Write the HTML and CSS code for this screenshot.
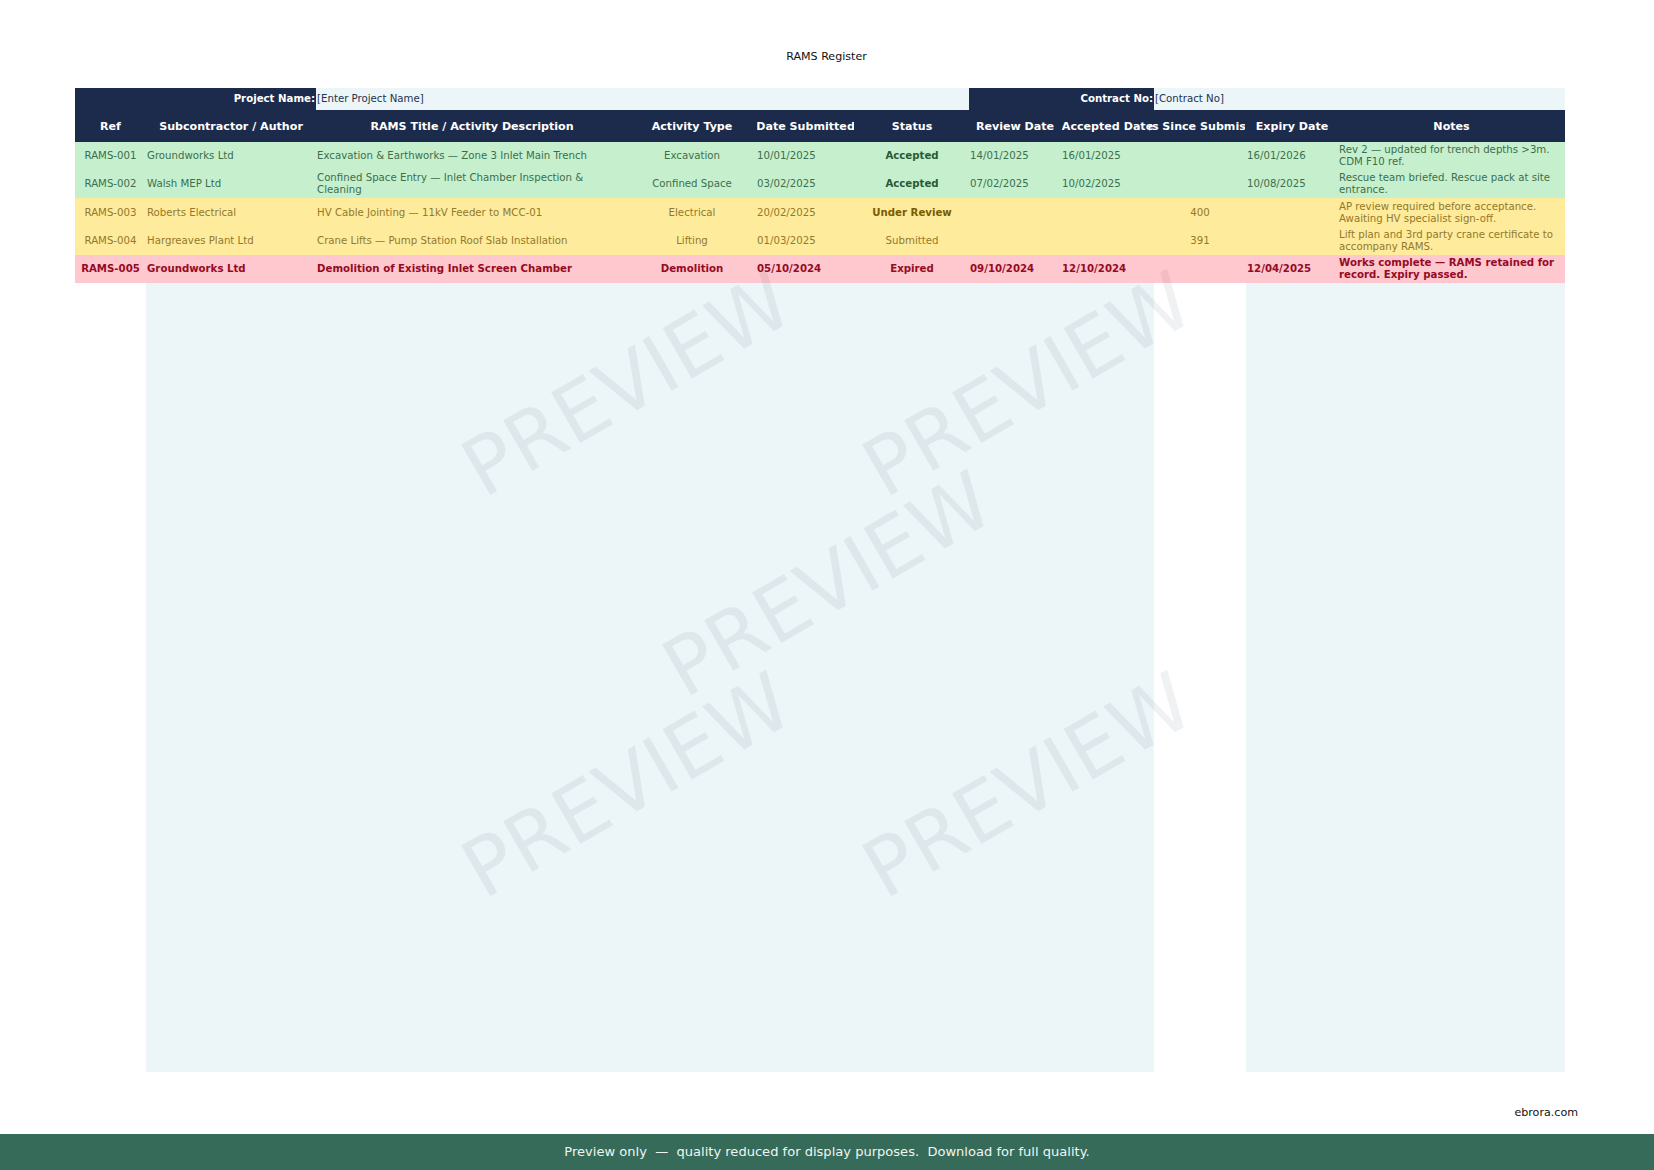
FILE: index.html
```html
<!DOCTYPE html>
<html lang="en">
<head>
<meta charset="utf-8">
<title>RAMS Register</title>
<link rel="stylesheet" href="styles.css">
</head>
<body>
<main class="page">
  <h1 class="title">RAMS Register</h1>
  <table class="register">
    <colgroup>
      <col class="c-ref"><col class="c-sub"><col class="c-title"><col class="c-type"><col class="c-date"><col class="c-status"><col class="c-review"><col class="c-acc"><col class="c-days"><col class="c-exp"><col class="c-notes">
    </colgroup>
    <thead>
      <tr class="band">
        <th colspan="2" class="label">Project Name:</th>
        <td colspan="4" class="field">[Enter Project Name]</td>
        <th colspan="2" class="label">Contract No:</th>
        <td colspan="3" class="field">[Contract No]</td>
      </tr>
      <tr class="head">
        <th><div class="clip">Ref</div></th>
        <th><div class="clip">Subcontractor / Author</div></th>
        <th><div class="clip">RAMS Title / Activity Description</div></th>
        <th><div class="clip">Activity Type</div></th>
        <th><div class="clip">Date Submitted</div></th>
        <th><div class="clip">Status</div></th>
        <th><div class="clip">Review Date</div></th>
        <th><div class="clip">Accepted Date</div></th>
        <th><div class="clip spill">Days Since Submission</div></th>
        <th><div class="clip">Expiry Date</div></th>
        <th><div class="clip">Notes</div></th>
      </tr>
    </thead>
    <tbody>
      <tr class="row green">
        <td class="mid">RAMS-001</td><td>Groundworks Ltd</td><td>Excavation &amp; Earthworks — Zone 3 Inlet Main Trench</td><td class="mid">Excavation</td><td>10/01/2025</td><td class="mid strong">Accepted</td><td>14/01/2025</td><td>16/01/2025</td><td class="mid"></td><td>16/01/2026</td><td>Rev 2 — updated for trench depths &gt;3m. CDM F10 ref.</td>
      </tr>
      <tr class="row green">
        <td class="mid">RAMS-002</td><td>Walsh MEP Ltd</td><td>Confined Space Entry — Inlet Chamber Inspection &amp; Cleaning</td><td class="mid">Confined Space</td><td>03/02/2025</td><td class="mid strong">Accepted</td><td>07/02/2025</td><td>10/02/2025</td><td class="mid"></td><td>10/08/2025</td><td>Rescue team briefed. Rescue pack at site entrance.</td>
      </tr>
      <tr class="row amber tall">
        <td class="mid">RAMS-003</td><td>Roberts Electrical</td><td>HV Cable Jointing — 11kV Feeder to MCC-01</td><td class="mid">Electrical</td><td>20/02/2025</td><td class="mid strong">Under Review</td><td></td><td></td><td class="mid">400</td><td></td><td>AP review required before acceptance. Awaiting HV specialist sign-off.</td>
      </tr>
      <tr class="row amber">
        <td class="mid">RAMS-004</td><td>Hargreaves Plant Ltd</td><td>Crane Lifts — Pump Station Roof Slab Installation</td><td class="mid">Lifting</td><td>01/03/2025</td><td class="mid">Submitted</td><td></td><td></td><td class="mid">391</td><td></td><td>Lift plan and 3rd party crane certificate to accompany RAMS.</td>
      </tr>
      <tr class="row red">
        <td class="mid">RAMS-005</td><td>Groundworks Ltd</td><td>Demolition of Existing Inlet Screen Chamber</td><td class="mid">Demolition</td><td>05/10/2024</td><td class="mid">Expired</td><td>09/10/2024</td><td>12/10/2024</td><td class="mid"></td><td>12/04/2025</td><td>Works complete — RAMS retained for record. Expiry passed.</td>
      </tr>
    </tbody>
  </table>
  <div class="filler">
    <div class="fill-a"></div>
    <div class="fill-b"></div>
  </div>
  <p class="brand">ebrora.com</p>
  <div class="watermarks" aria-hidden="true">
    <span class="mark m1">PREVIEW</span>
    <span class="mark m2">PREVIEW</span>
    <span class="mark m3">PREVIEW</span>
    <span class="mark m4">PREVIEW</span>
    <span class="mark m5">PREVIEW</span>
  </div>
</main>
<footer class="notice">Preview only  —  quality reduced for display purposes.  Download for full quality.</footer>
</body>
</html>
```
FILE: styles.css
```css
* { box-sizing: border-box; }
html, body { margin: 0; padding: 0; }
body {
  width: 1654px;
  height: 1170px;
  overflow: hidden;
  background: #fff;
  font-family: "DejaVu Sans", sans-serif;
  display: flex;
  flex-direction: column;
}
.page {
  position: relative;
  flex: 1;
  padding: 49px 89px 0 75px;
  display: flex;
  flex-direction: column;
}
.title {
  margin: 0 -13px 0 0;
  height: 39px;
  font-size: 11.1px;
  font-weight: 400;
  line-height: 16px;
  text-align: center;
  color: #111;
}
.register {
  width: 1490px;
  table-layout: fixed;
  border-collapse: collapse;
  font-size: 10.2px;
}
.c-ref { width: 71px; }
.c-sub { width: 170px; }
.c-title { width: 312px; }
.c-type { width: 128px; }
.c-date { width: 99px; }
.c-status { width: 114px; }
.c-review { width: 92px; }
.c-acc { width: 93px; }
.c-days { width: 92px; }
.c-exp { width: 92px; }
.c-notes { width: 227px; }
.register th, .register td { padding: 0 1px; }
.band { height: 22px; }
.band .label {
  background: #1c2b4c;
  color: #fff;
  text-align: right;
  font-size: 10.2px;
  font-weight: 700;
  padding-bottom: 2px;
}
.band .field {
  background: #ecf5f8;
  color: #23334f;
  font-size: 10.2px;
  padding-bottom: 2px;
}
.head { height: 32px; background: #1c2b4c; color: #fff; }
.head th { font-size: 11.1px; font-weight: 700; }
.clip { display: flex; justify-content: center; overflow: hidden; white-space: nowrap; }
.spill { margin-left: -6px; padding-left: 6px; }
.row { height: 28px; }
.row.tall { height: 29px; }
.row td { line-height: 11.6px; vertical-align: middle; }
.mid { text-align: center; }
.strong { font-weight: 700; }
.green { background: #c6efce; color: #3b6f4c; }
.green .strong { color: #2a5a32; }
.amber { background: #ffeb9c; color: #93792a; }
.amber .strong { color: #7a5c00; }
.red { background: #ffc7ce; color: #960a24; font-weight: 700; }
.filler {
  flex: none;
  height: 789px;
  margin-left: 71px;
  display: flex;
  justify-content: space-between;
}
.fill-a { width: 1008px; background: #ecf5f8; }
.fill-b { width: 319px; background: #ecf5f8; }
.brand {
  margin: 33px -13px 0 0;
  font-size: 11.1px;
  line-height: 16px;
  text-align: right;
  color: #111;
}
.watermarks { position: absolute; inset: 0; pointer-events: none; }
.mark {
  position: absolute;
  width: 0;
  height: 0;
  display: flex;
  justify-content: center;
  align-items: center;
  white-space: nowrap;
  font-size: 80px;
  line-height: 1;
  color: rgba(40, 60, 80, 0.07);
  transform: rotate(-30deg);
}
.m1 { left: 627px; top: 385px; }
.m2 { left: 1028px; top: 385px; }
.m3 { left: 828px; top: 585px; }
.m4 { left: 627px; top: 786px; }
.m5 { left: 1028px; top: 786px; }
.notice {
  flex: none;
  height: 36px;
  background: #356b58;
  color: #f0f5f2;
  font-size: 13.05px;
  line-height: 36px;
  text-align: center;
  white-space: pre;
}
```
